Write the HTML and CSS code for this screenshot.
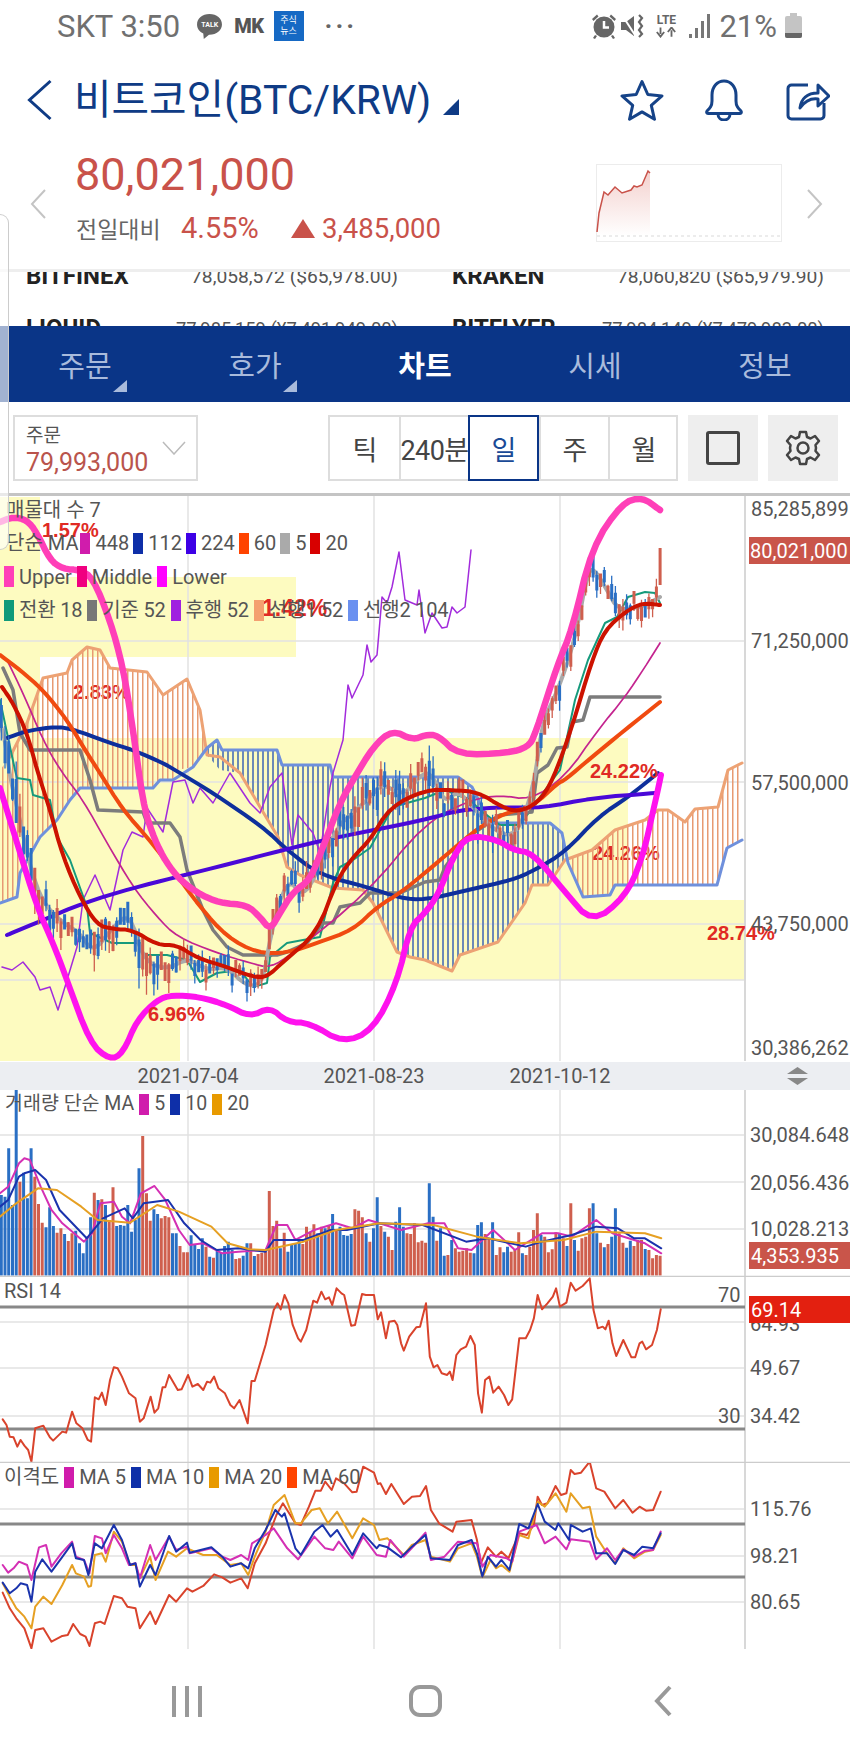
FILE: index.html
```html
<!DOCTYPE html>
<html lang="ko">
<head>
<meta charset="utf-8">
<title>비트코인(BTC/KRW)</title>
<link rel="stylesheet" href="styles.css">
</head>
<body>
<div class="app">
  <div class="side-tab"></div>

  <div class="status">
    <span class="st-text">SKT 3:50</span>
    <span class="talk"><svg class="talk-bubble" viewBox="0 0 26 26"><path d="M13 1C6 1 1 5.400 1 11c0 4 2.500 7 6 8.700L7.500 25l5-4.100c7 .2 12.500-4.300 12.500-9.900C25 5.400 20 1 13 1z"/></svg><b>TALK</b></span>
    <span class="mk">MK</span>
    <span class="news">주식<br>뉴스</span>
    <span class="dots">···</span>
    <span class="status-space"></span>
    <svg class="ic-alarm" viewBox="0 0 28 28"><circle cx="14" cy="15" r="10.500"/><path class="hand" d="M14 9v6.500h5"/><path d="M2 7l5-4.500 1.500 2-5 4.500zM26 7l-5-4.500-1.500 2 5 4.500zM5 23l-2 3 2 1 2-3zM23 23l2 3-2 1-2-3z"/></svg>
    <svg class="ic-mute" viewBox="0 0 24 26"><path d="M0 9h5l8-6v20l-8-6H0z"/><path class="cut" d="M1 2l13 20"/><path class="wave" d="M18 2l3 3-3 4 3 4-3 4 3 4-3 3"/></svg>
    <span class="lte"><b>LTE</b><svg viewBox="0 0 24 11"><path d="M6 0v7M2 5l4 5 4-5M18 10V3M14 5l4-5 4 5"/></svg></span>
    <span class="signal"><i class="s1"></i><i class="s2"></i><i class="s3"></i><i class="s4"></i></span>
    <span class="st-text st-pct">21%</span>
    <span class="battery"><i></i></span>
  </div>

  <div class="header">
    <svg class="ic-back" viewBox="0 0 26 42"><path d="M24 2L3 21l21 19"/></svg>
    <h1 class="title">비트코인(BTC/KRW)</h1>
    <span class="title-tri"></span>
    <span class="status-space"></span>
    <svg class="ic-head ic-star" viewBox="0 0 44 42"><path d="M22 2.500l5.800 13 14.200 1.400-10.700 9.400 3.200 14L22 32.900 9.500 40.300l3.200-14L2 16.900l14.200-1.400z"/></svg>
    <svg class="ic-head ic-bell" viewBox="0 0 40 42"><path d="M3 32c3-3 5-5 5-10v-6C8 8 13 2 20 2s12 6 12 14v6c0 5 2 7 5 10 1 1.500 0 2.500-1.500 2.500h-31C3 34.500 2 33.500 3 32z"/><path d="M14 35c0 3.500 2.500 6 6 6s6-2.500 6-6"/></svg>
    <svg class="ic-head ic-share" viewBox="0 0 44 42"><path d="M22 6H5.500A3.500 3.500 0 0 0 2 9.500v27A3.500 3.500 0 0 0 5.500 40h29a3.500 3.500 0 0 0 3.500-3.500V24"/><path d="M14 29c1-9 7-15 18-15V6l11 11-11 10v-7c-7-1-13 2-18 9z"/></svg>
  </div>

  <div class="quote">
    <svg class="ic-nav" viewBox="0 0 16 30"><path d="M15 1L2 15l13 14"/></svg>
    <div class="quote-main">
      <div class="price">80,021,000</div>
      <div class="change">
        <span class="change-label">전일대비</span>
        <span class="change-pct">4.55%</span>
        <span class="change-tri"></span>
        <span class="change-abs">3,485,000</span>
      </div>
    </div>
    <span class="status-space"></span>
    <svg class="mini" viewBox="596 164 186 78">
      <defs><linearGradient id="miniFill" x1="0" y1="0" x2="0" y2="1"><stop offset="0" stop-color="#d9655b" stop-opacity=".3"/><stop offset="1" stop-color="#d9655b" stop-opacity="0"/></linearGradient></defs>
      <rect class="mini-box" x="596.500" y="164.500" width="185" height="77"/>
      <line class="mini-dash" x1="597" y1="236" x2="781" y2="236"/>
      <path class="mini-fill" d="M597 232L599 213 604 192 608 195 615 187 622 193 631 190 634 186 637 187 642 185 648 171 650 173V236H597z"/>
      <path class="mini-line" d="M597 232L599 213 604 192 608 195 615 187 622 193 631 190 634 186 637 187 642 185 648 171 650 173"/>
    </svg>
    <svg class="ic-nav ic-nav-r" viewBox="0 0 16 30"><path d="M1 1l13 14L1 29"/></svg>
  </div>

  <div class="ticker">
    <div class="ticker-list">
      <div class="t-row">
        <div class="t-cell"><b>BITFINEX</b><span>78,058,572 ($65,978.00)</span></div>
        <div class="t-cell"><b>KRAKEN</b><span>78,060,820 ($65,979.90)</span></div>
      </div>
      <div class="t-row">
        <div class="t-cell"><b>LIQUID</b><span>77,985,159 (¥7,491,949.00)</span></div>
        <div class="t-cell"><b>BITFLYER</b><span>77,984,149 (¥7,479,983.00)</span></div>
      </div>
    </div>
  </div>

  <nav class="tabs">
    <div class="tab tab-more">주문</div>
    <div class="tab tab-more">호가</div>
    <div class="tab tab-on">차트</div>
    <div class="tab">시세</div>
    <div class="tab">정보</div>
  </nav>

  <div class="controls">
    <div class="order">
      <div class="order-text"><div class="order-label">주문</div><div class="order-value">79,993,000</div></div>
      <svg class="order-chev" viewBox="0 0 24 14"><path d="M1 1l11 12L23 1"/></svg>
    </div>
    <div class="seg">
      <div class="seg-cell">틱</div>
      <div class="seg-cell">240분</div>
      <div class="seg-cell seg-on">일</div>
      <div class="seg-cell">주</div>
      <div class="seg-cell">월</div>
    </div>
    <div class="tool"><span class="tool-square"></span></div>
    <div class="tool">
      <svg class="ic-gear" viewBox="0 0 36 36"><path d="M15 2h6l1 5 3.500 1.500L30 6l4 5-3.500 4 .5 3-.5 3 3.500 4-4 5-4.500-2.500L22 29l-1 5h-6l-1-5-3.500-1.500L6 30l-4-5 3.500-4-.5-3 .5-3L2 11l4-5 4.500 2.500L14 7z"/><circle cx="18" cy="18" r="5.500"/></svg>
    </div>
  </div>

  <div class="panel">
    <svg class="plot plot-main" viewBox="0 496 850 594">
      <defs>
        <pattern id="hatchOrange" width="5" height="10" patternUnits="userSpaceOnUse"><rect x="2" width="1.500" height="10" fill="#e79a72"/></pattern>
        <pattern id="hatchBlue" width="5" height="10" patternUnits="userSpaceOnUse"><rect x="2" width="2" height="10" fill="#6d8ab6"/></pattern>
      </defs>
      <rect class="yellow" x="0" y="497" width="40" height="80"/>
      <rect class="yellow" x="0" y="577" width="296" height="80"/>
      <rect class="yellow" x="0" y="657" width="40" height="81"/>
      <rect class="yellow" x="0" y="738" width="628" height="242"/>
      <rect class="yellow" x="628" y="900" width="117" height="80"/>
      <rect class="yellow" x="0" y="980" width="180" height="81"/>
      <path class="grid" d="M0 641H745M0 782H745M0 924H745M0 980H745M188 496V1061M374 496V1061M560 496V1061"/>
      <path class="axis" d="M745 496V1061"/>
      <text class="pct" x="73" y="699">2.83%</text>
      <text class="pct" x="592" y="860">24.26%</text>
      <polygon class="hatch-o" points="0,770 10,757 27,723 43,678 67,673 72,660 87,647 100,650 110,668 147,672 163,695 187,679 200,710 207,755 207,748 193,767 177,770 173,780 160,780 153,788 80,788 70,800 57,820 40,837 20,873 17,897 0,903"/>
      <polygon class="hatch-b" points="207,748 217,740 222,750 277,750 282,765 330,765 333,777 458,777 472,787 490,823 550,823 562,833 568,863 565,860 548,885 532,885 525,903 498,942 460,955 452,971 425,960 410,957 397,952 373,903 363,890 333,888 300,875 287,867 278,837 263,812 240,773 220,770 207,755"/>
      <polygon class="hatch-o" points="565,860 592,850 615,830 645,820 658,810 668,810 685,822 695,809 718,807 728,770 742,763 742,840 727,848 717,885 615,885 610,895 583,897 568,863"/>
      <polyline class="l-senkou1" points="10,757 27,723 43,678 67,673 72,660 87,647 100,650 110,668 147,672 163,695 187,679 200,710 207,755 220,757 240,773 263,812 278,837 287,867 300,875 333,888 363,890 373,903 397,952 410,957 425,960 452,971 460,955 498,942 525,903 532,885 548,885 565,860 592,850 615,830 645,820 658,810 668,810 685,822 695,809 718,807 728,770 742,763"/>
      <polyline class="l-senkou2" points="0,903 17,897 20,873 40,837 57,820 70,800 80,788 153,788 160,780 173,780 193,767 207,748 217,740 222,750 277,750 282,765 330,765 333,777 458,777 472,787 490,823 550,823 562,833 568,863 583,897 610,895 615,885 717,885 727,848 742,840"/>
      <polyline class="l-chikou" points="2,967 12,970 23,962 35,977 40,990 50,987 58,1010 77,947 83,900 95,875 110,910 123,850 132,832 143,837 147,808 163,832 173,782 185,780 193,803 200,788 213,803 230,773 250,803 260,813 270,787 282,773 292,845 298,815 313,833 320,853 330,787 333,773 343,740 348,685 352,698 363,675 367,645 371,662 377,655 382,597 387,603 392,587 399,552 405,600 417,605 419,590 425,633 432,613 442,628 447,627 452,607 457,613 465,607 471,550"/>
      <polyline class="l-tenkan" points="0,700 7,733 15,770 17,778 30,780 33,795 50,800 57,837 70,860 87,907 90,933 112,943 140,943 143,955 167,955 187,960 200,982 217,973 240,970 253,987 267,983 270,957 287,943 303,940 320,937 333,883 340,867 353,860 370,848 393,807 407,803 425,798 445,790 470,800 480,810 500,825 520,825 545,790 560,770 575,700 588,660 605,623 617,617 628,597 645,592 655,593 660,603"/>
      <polyline class="l-kijun" points="3,668 13,690 20,733 30,750 80,750 90,780 98,810 143,812 147,823 170,823 180,837 187,870 203,910 213,930 227,947 243,955 277,955 287,952 307,943 323,923 333,923 340,907 360,903 370,893 400,893 425,882 440,880 445,867 468,837 500,815 532,812 537,773 548,765 557,748 567,747 572,722 583,720 590,697 660,697"/>
      <polyline class="smooth l-ma448" points="7,660 23,693 43,740 60,770 83,800 107,843 133,887 157,917 177,937 217,953 250,963 270,968 293,953 367,893 425,823 470,800 500,795 530,800 565,777 598,730 625,697 645,667 660,643"/>
      <polyline class="smooth l-ma112" points="7,738 23,732 50,727 70,728 110,743 133,750 163,763 175,770 213,793 263,827 287,850 320,875 367,887 400,898 425,900 468,890 512,880 535,870 565,852 598,817 628,797 658,773"/>
      <polyline class="smooth l-ma224" points="7,935 43,920 83,903 133,888 173,878 233,863 283,850 333,838 425,820 458,810 508,807 542,808 592,798 655,793"/>
      <polyline class="smooth l-ma60" points="0,655 20,670 43,690 67,720 87,753 98,770 123,810 147,837 173,870 200,907 227,937 257,953 287,953 317,943 353,930 377,907 400,893 425,873 452,850 478,828 505,813 532,807 558,783 565,780 592,757 625,730 660,702"/>
      <polyline class="smooth l-ma5" points="0,723 5,740 10,777 17,807 30,867 43,903 63,923 80,933 93,953 113,927 130,913 143,960 167,970 187,958 207,970 227,967 247,987 263,983 270,937 287,877 303,897 317,873 337,827 353,813 370,797 383,783 403,797 425,770 435,780 445,803 458,790 475,810 502,837 520,830 535,780 542,723 558,690 575,640 588,570 595,570 607,590 618,610 642,607 660,597"/>
      <g id="candles"></g>
      <polyline class="smooth l-ma20" points="2,687 13,703 27,733 37,770 50,810 63,857 80,897 97,925 113,929 133,930 157,945 177,945 197,958 227,967 253,977 267,977 283,962 317,933 337,880 353,857 370,840 390,807 425,790 452,790 478,792 502,807 518,812 538,803 553,780 572,727 592,660 605,630 625,612 642,603 660,605"/>
      <polyline class="smooth l-upper" points="0,522 13,517 27,520 37,533 50,560 63,569 80,570 93,578 110,620 123,667 133,730 143,803 152,833 163,857 177,877 197,893 220,903 247,905 260,917 270,930 280,913 293,892 310,880 323,847 340,803 353,780 373,747 392,730 413,740 425,735 438,735 458,755 508,753 528,747 535,735 558,663 572,630 592,547 622,503 642,497 660,510"/>
      <polyline class="smooth l-lower" points="0,788 17,843 37,907 53,943 67,980 90,1043 110,1060 123,1053 137,1020 157,1000 172,995 200,997 227,1005 250,1017 270,1007 287,1022 310,1023 343,1043 373,1030 397,983 410,927 425,913 438,895 453,857 468,835 498,840 513,850 533,853 565,892 592,923 625,897 642,860 655,803 661,775"/>
      <text class="pct" x="42" y="537">1.57%</text>
      <text class="pct pct-wide" x="262" y="616">1.42%</text>
      <text class="pct" x="590" y="778">24.22%</text>
      <text class="pct" x="707" y="940">28.74%</text>
      <text class="pct" x="148" y="1021">6.96%</text>
      <rect class="datebar" x="0" y="1062" width="850" height="28"/>
      <polygon class="sort" points="797.500,1067 808,1074 787,1074"/>
      <polygon class="sort" points="787,1078 808,1078 797.500,1085"/>
      <text class="ax" x="751" y="509">85,285,899</text>
      <rect class="tag" x="749" y="537" width="101" height="27"/>
      <text class="ax ax-w" x="750" y="551">80,021,000</text>
      <text class="ax" x="751" y="641">71,250,000</text>
      <text class="ax" x="751" y="783">57,500,000</text>
      <text class="ax" x="751" y="924">43,750,000</text>
      <text class="ax" x="751" y="1048">30,386,262</text>
      <text class="ax ax-date" x="188" y="1076">2021-07-04</text>
      <text class="ax ax-date" x="374" y="1076">2021-08-23</text>
      <text class="ax ax-date" x="560" y="1076">2021-10-12</text>
    </svg>
    <div class="legend legend-main">
      <div class="lg-row"><span>매물대 수 7</span></div>
      <div class="lg-row"><span>단순 MA</span><i class="sw c-448"></i><span>448</span><i class="sw c-112"></i><span>112</span><i class="sw c-224"></i><span>224</span><i class="sw c-60"></i><span>60</span><i class="sw c-5"></i><span>5</span><i class="sw c-20"></i><span>20</span></div>
      <div class="lg-row"><i class="sw c-upper"></i><span>Upper</span><i class="sw c-middle"></i><span>Middle</span><i class="sw c-lower"></i><span>Lower</span></div>
      <div class="lg-row"><i class="sw c-tenkan"></i><span>전환 18</span><i class="sw c-kijun"></i><span>기준 52</span><i class="sw c-chikou"></i><span>후행 52</span><i class="sw c-s1"></i><span>선행1 52</span><i class="sw c-s2"></i><span>선행2 104</span></div>
    </div>
  </div>

  <div class="panel">
    <svg class="plot plot-vol" viewBox="0 1090 850 187">
      <path class="grid" d="M0 1135H745M0 1182H745M0 1229H745M188 1090V1276M374 1090V1276M560 1090V1276"/>
      <path class="axis" d="M745 1090V1276"/>
      <g id="volumes"></g>
      <g transform="translate(0 1060) scale(.542 .3333)">
        <polyline class="sub l-v5" points="0,400 15,380 35,310 45,295 55,300 75,380 95,450 115,490 155,545 170,520 185,430 210,425 225,470 240,490 260,400 285,378 305,420 330,510 350,555 375,550 410,580 440,575 490,570 510,495 530,495 545,540 580,510 620,490 650,505 680,480 700,490 740,510 790,490 820,490 845,565 870,570 910,510 950,570 1000,520 1030,520 1055,530 1100,480 1130,520 1170,540 1190,550 1220,580"/>
        <polyline class="sub l-v10" points="0,440 15,420 35,350 45,340 65,330 85,360 110,450 160,535 190,475 230,445 245,475 265,430 310,420 340,490 370,540 400,570 440,565 490,575 505,540 560,540 610,510 640,510 700,490 780,495 860,545 900,535 970,560 1000,545 1055,525 1100,500 1140,505 1170,535 1190,535 1220,565"/>
        <polyline class="sub l-v20" points="0,470 30,430 70,385 105,390 150,440 180,480 240,488 290,435 330,455 390,500 420,550 460,568 490,570 560,545 620,510 700,490 800,495 880,530 960,550 1040,540 1100,515 1190,520 1220,535"/>
      </g>
      <path class="divider" d="M0 1276.500H850"/>
      <text class="ax" x="750" y="1135">30,084.648</text>
      <text class="ax" x="750" y="1183">20,056.436</text>
      <text class="ax" x="750" y="1229">10,028.213</text>
      <rect class="tag" x="749" y="1242" width="101" height="27"/>
      <text class="ax ax-w" x="751" y="1256">4,353.935</text>
    </svg>
    <div class="legend legend-vol">
      <div class="lg-row"><span>거래량 단순 MA</span><i class="sw c-448"></i><span>5</span><i class="sw c-112"></i><span>10</span><i class="sw c-v20"></i><span>20</span></div>
    </div>
  </div>

  <div class="panel">
    <svg class="plot plot-rsi" viewBox="0 1277 850 186">
      <path class="grid" d="M0 1322H745M0 1368H745M0 1416H745M188 1277V1462M374 1277V1462M560 1277V1462"/>
      <path class="axis" d="M745 1277V1462"/>
      <path class="thick" d="M0 1307H745M0 1429H745"/>
      <g transform="translate(0 1280) scale(.542 .3333)">
        <polyline class="sub l-rsi" points="5,418 12,435 18,470 25,472 32,500 38,480 45,497 52,510 58,545 65,445 80,437 92,472 98,482 115,455 122,458 133,395 141,430 152,445 162,480 168,485 175,352 182,358 188,338 195,375 203,300 210,262 217,265 225,290 238,340 250,355 258,425 265,415 278,350 285,398 292,385 300,322 305,322 312,285 328,330 335,328 347,285 355,320 365,312 375,330 382,305 388,308 395,290 403,325 415,340 425,375 432,385 442,360 457,430 464,303 470,303 490,195 505,90 512,70 518,88 525,45 532,70 540,135 550,175 555,185 565,150 578,62 585,68 593,35 600,58 607,52 613,75 621,25 630,40 635,45 648,137 655,135 668,42 675,45 690,45 697,118 703,97 712,175 718,125 728,122 733,135 740,190 745,212 755,170 768,142 775,140 786,70 793,230 800,262 807,255 815,280 825,285 830,275 835,300 842,225 850,208 860,200 868,168 876,195 882,340 889,398 895,300 903,290 910,338 920,320 930,345 938,375 945,358 958,175 970,175 978,150 985,115 992,45 1000,88 1010,70 1020,50 1026,25 1033,80 1045,68 1053,8 1062,32 1075,18 1088,-5 1095,90 1103,145 1112,140 1117,148 1123,122 1130,190 1137,228 1150,180 1165,232 1172,232 1180,190 1185,185 1192,208 1203,195 1212,150 1219,88"/>
      </g>
      <path class="divider" d="M0 1462.500H850"/>
      <text class="ax" x="718" y="1295">70</text>
      <text class="ax" x="750" y="1324">64.93</text>
      <rect class="tag tag-rsi" x="749" y="1296" width="101" height="27"/>
      <text class="ax ax-w" x="751" y="1310">69.14</text>
      <text class="ax" x="750" y="1368">49.67</text>
      <text class="ax" x="718" y="1416">30</text>
      <text class="ax" x="750" y="1416">34.42</text>
    </svg>
    <div class="legend legend-rsi"><div class="lg-row"><span>RSI 14</span></div></div>
  </div>

  <div class="panel">
    <svg class="plot plot-disp" viewBox="0 1463 850 186">
      <path class="grid" d="M0 1509H745M0 1556H745M0 1602H745M188 1463V1649M374 1463V1649M560 1463V1649"/>
      <path class="axis" d="M745 1463V1649"/>
      <path class="thick" d="M0 1524H745M0 1577H745"/>
      <g transform="translate(0 1460) scale(.542 .3333)">
        <polyline class="sub l-d60" points="5,398 18,445 30,475 45,505 58,565 65,510 80,505 95,545 115,528 125,525 135,492 148,522 158,530 165,558 175,490 185,485 193,492 210,408 225,415 235,440 250,445 258,505 277,455 287,492 312,405 325,425 345,385 355,395 375,378 395,343 410,352 425,368 445,355 457,385 470,310 490,250 510,165 522,130 545,190 555,195 570,140 582,92 592,92 600,65 612,90 620,55 635,70 650,97 658,95 670,20 690,38 697,72 702,70 712,102 722,72 745,132 760,110 775,108 786,78 795,150 810,190 835,215 842,185 870,180 880,240 887,310 900,262 915,290 925,275 938,295 958,220 972,225 985,195 992,110 1000,135 1010,130 1025,78 1035,105 1045,100 1053,30 1060,42 1072,38 1088,5 1100,85 1115,95 1135,145 1150,120 1167,158 1180,140 1192,152 1205,150 1219,95"/>
        <polyline class="sub l-d20" points="5,370 18,410 30,445 45,470 58,505 65,440 80,410 95,432 115,375 133,315 140,340 155,350 163,380 168,378 175,285 188,280 195,305 210,215 225,245 240,315 250,315 258,355 277,290 287,360 310,275 325,290 345,265 375,285 400,285 425,315 445,310 458,345 470,290 490,215 505,135 525,105 545,190 555,190 575,150 590,145 605,190 622,155 650,235 670,175 690,195 700,240 715,235 745,285 760,255 785,240 795,290 830,305 845,265 870,250 880,290 890,352 905,300 915,325 925,315 940,335 958,225 975,235 992,125 1005,140 1025,100 1045,155 1053,100 1075,145 1088,140 1100,230 1120,280 1135,310 1150,265 1170,295 1190,275 1205,270 1219,225"/>
        <polyline class="sub l-d5" points="5,315 15,338 25,325 35,305 50,315 58,360 72,262 85,255 95,320 113,280 133,245 140,290 155,300 165,340 175,228 188,235 195,280 210,225 225,265 238,315 250,310 258,355 277,255 287,300 312,230 325,270 345,260 350,280 390,265 410,290 425,300 445,285 458,300 465,250 490,225 505,205 530,265 550,298 580,230 600,265 615,270 625,245 650,295 670,230 695,285 712,290 720,240 745,290 765,255 785,218 795,300 820,290 845,245 880,250 890,320 905,285 935,295 945,305 958,215 990,195 1005,250 1025,230 1045,268 1053,238 1088,245 1100,298 1120,265 1135,300 1150,268 1170,290 1190,272 1205,270 1219,215"/>
        <polyline class="sub l-d10" points="5,368 18,400 30,385 38,370 50,375 58,425 65,335 78,298 95,335 113,295 133,250 140,295 155,300 163,345 175,250 188,265 210,195 225,240 240,315 250,310 258,380 277,315 287,345 312,228 325,275 345,248 350,278 390,262 410,290 425,320 445,310 458,325 470,265 490,210 508,150 520,170 525,160 545,265 555,285 580,215 595,195 610,230 622,210 650,285 670,220 695,265 700,255 715,262 740,292 760,260 785,225 795,295 830,300 845,255 870,240 880,280 890,350 900,290 915,320 925,300 940,330 958,192 975,205 992,132 1005,185 1025,210 1030,190 1050,240 1053,195 1075,215 1090,205 1100,280 1120,280 1135,312 1150,270 1170,285 1185,260 1205,265 1219,220"/>
      </g>
      <text class="ax" x="750" y="1509">115.76</text>
      <text class="ax" x="750" y="1556">98.21</text>
      <text class="ax" x="750" y="1602">80.65</text>
    </svg>
    <div class="legend legend-disp">
      <div class="lg-row"><span>이격도</span><i class="sw c-448"></i><span>MA 5</span><i class="sw c-112"></i><span>MA 10</span><i class="sw c-v20"></i><span>MA 20</span><i class="sw c-60"></i><span>MA 60</span></div>
    </div>
  </div>

  <div class="softkeys">
    <span class="key key-recent"><i></i><i></i><i></i></span>
    <span class="key"><span class="key-home"></span></span>
    <span class="key"><svg class="key-back" viewBox="0 0 18 32"><path d="M16 2L3 16l13 14"/></svg></span>
  </div>
</div>
<script src="chart.js"></script>
</body>
</html>
```

FILE: styles.css
```css
* { box-sizing: border-box; }
html, body { margin: 0; padding: 0; background: #fff; }
body { font-family: Roboto, "Noto Sans CJK KR", sans-serif; color: #555; }
.app { position: relative; width: 850px; height: 1748px; overflow: hidden; background: #fff; }
.status-space { flex: 1; }

.side-tab { position: absolute; left: 0; top: 214px; width: 9px; height: 336px; z-index: 5; background: rgba(255,255,255,.62); border: 1px solid #ccc; border-left: 0; border-radius: 0 10px 10px 0; }

/* status bar */
.status { height: 60px; display: flex; align-items: center; padding: 0 48px 8px 57px; color: #707070; }
.st-text { font-size: 31px; white-space: nowrap; }
.talk { position: relative; width: 27px; height: 27px; margin-left: 16px; }
.talk-bubble { width: 27px; height: 27px; display: block; fill: #666; }
.talk b { position: absolute; left: 0; right: 0; top: 7px; text-align: center; font-size: 7px; color: #fff; line-height: 10px; }
.mk { margin-left: 11px; font-size: 20px; font-weight: 900; color: #555; letter-spacing: -.5px; }
.news { margin-left: 10px; width: 30px; height: 30px; background: #1669c4; color: #fff; font-size: 9px; line-height: 11px; text-align: center; padding-top: 4px; }
.dots { margin-left: 21px; font-size: 26px; line-height: 20px; letter-spacing: 3px; color: #666; font-weight: 700; }
.ic-alarm { width: 28px; height: 28px; fill: #666; }
.ic-alarm .hand { fill: none; stroke: #fff; stroke-width: 2.5; }
.ic-mute { width: 24px; height: 26px; margin-left: 3px; fill: #666; }
.ic-mute .cut { stroke: #fff; stroke-width: 2; fill: none; }
.ic-mute .wave { fill: none; stroke: #666; stroke-width: 2.2; }
.lte { width: 26px; margin-left: 8px; display: flex; flex-direction: column; align-items: center; }
.lte b { font-size: 12px; line-height: 13px; color: #666; }
.lte svg { width: 22px; height: 11px; fill: none; stroke: #666; stroke-width: 2; }
.signal { display: flex; align-items: flex-end; gap: 3px; height: 24px; margin-left: 10px; }
.signal i { display: block; width: 3px; background: #777; }
.s1 { height: 4px; } .s2 { height: 10px; } .s3 { height: 17px; } .s4 { height: 24px; }
.st-pct { margin-left: 9px; }
.battery { position: relative; width: 17px; height: 22px; margin-left: 8px; margin-top: 2px; background: #c4c4c4; border-radius: 2px; }
.battery::before { content: ""; position: absolute; left: 5px; top: -3px; width: 7px; height: 3px; background: #c4c4c4; }
.battery i { position: absolute; left: 0; right: 0; bottom: 0; height: 5px; background: #666; border-radius: 0 0 2px 2px; }

/* header */
.header { height: 80px; display: flex; align-items: center; padding: 0 20px 0 26px; }
.ic-back { width: 27px; height: 42px; fill: none; stroke: #0f3b85; stroke-width: 3; }
.title { margin: 0 0 0 21px; font-size: 40.800px; font-weight: 400; color: #0f3b85; white-space: nowrap; line-height: 44px; }
.title-tri { width: 0; height: 0; margin: 14px 0 0 12px; border-left: 16px solid transparent; border-bottom: 16px solid #0f3b85; }
.ic-head { height: 42px; fill: none; stroke: #164388; stroke-width: 3; stroke-linejoin: round; }
.ic-star { width: 44px; }
.ic-bell { width: 40px; margin-left: 40px; }
.ic-share { width: 44px; margin-left: 42px; }

/* quote */
.quote { height: 129px; display: flex; padding: 0 27px 0 30px; }
.ic-nav { width: 16px; height: 30px; margin-top: 49px; fill: none; stroke: #c4c4c4; stroke-width: 2; }
.ic-nav-r { margin-left: 25px; }
.quote-main { margin-left: 30px; padding-top: 10px; }
.price { font-size: 45px; line-height: 50px; color: #c9524a; margin-left: -1px; }
.change { display: flex; align-items: center; height: 34px; margin-top: 11px; }
.change-label { font-size: 23px; color: #666; width: 105px; white-space: nowrap; }
.change-pct { font-size: 29px; color: #c9524a; width: 110px; }
.change-tri { width: 0; height: 0; border-left: 12px solid transparent; border-right: 12px solid transparent; border-bottom: 19px solid #c9524a; margin-right: 7px; }
.change-abs { font-size: 27.500px; color: #c9524a; }
.mini { width: 186px; height: 78px; margin-top: 24px; }
.mini-box { fill: #fff; stroke: #ececec; }
.mini-dash { stroke: #e6e6e6; stroke-width: 1.5; stroke-dasharray: 3 3; }
.mini-fill { fill: url(#miniFill); }
.mini-line { fill: none; stroke: #c9524a; stroke-width: 1.5; }

/* ticker */
.ticker { height: 57px; border-top: 3px solid #eee; overflow: hidden; }
.ticker-list { margin-top: -22px; padding: 0 26px; }
.t-row { display: flex; gap: 54px; height: 52px; align-items: center; }
.t-cell { width: 372px; display: flex; justify-content: space-between; align-items: center; font-size: 19.200px; color: #555; }
.t-row + .t-row .t-cell { font-size: 18.400px; }
.t-cell b { font-size: 24px; color: #222; }

/* tabs */
.tabs { height: 76px; background: #0a3587; display: flex; }
.tab { position: relative; flex: 1; display: flex; align-items: center; justify-content: center; font-size: 29px; color: #a9bbdc; }
.tab-on { color: #fff; font-weight: 700; }
.tab-more::after { content: ""; position: absolute; left: 113px; bottom: 10px; width: 0; height: 0; border-left: 14px solid transparent; border-bottom: 12px solid #a9bbdc; }

/* controls */
.controls { height: 94px; display: flex; padding: 13px 12px 0 13px; border-bottom: 3px solid #c4c4c4; }
.order { width: 185px; height: 66px; border: 2px solid #ddd; display: flex; align-items: center; padding-left: 11px; }
.order-text { padding-top: 3px; }
.order-label { font-size: 19px; line-height: 26px; color: #555; }
.order-value { font-size: 25px; line-height: 28px; color: #b9544c; }
.order-chev { width: 24px; height: 14px; margin-left: 14px; fill: none; stroke: #bbb; stroke-width: 1.5; }
.seg { width: 350px; height: 66px; margin-left: 130px; display: flex; border: 2px solid #ddd; }
.seg-cell { width: 69px; flex: none; display: flex; align-items: center; justify-content: center; font-size: 27px; color: #444; border-left: 2px solid #ddd; white-space: nowrap; letter-spacing: -.6px; }
.seg-cell:first-child { border-left: 0; }
.seg-on { margin: -2px 0; width: 71px; border: 2px solid #0a3587; color: #1a4a96; }
.tool { width: 70px; height: 66px; margin-left: 10px; background: #eee; display: flex; align-items: center; justify-content: center; }
.tool-square { width: 34px; height: 34px; border: 3px solid #444; border-radius: 3px; }
.ic-gear { width: 36px; height: 36px; fill: none; stroke: #444; stroke-width: 2.5; stroke-linejoin: round; }

/* charts */
.panel { position: relative; }
.plot { display: block; width: 850px; }
.plot-main { height: 594px; }
.plot-vol { height: 187px; }
.plot-rsi, .plot-disp { height: 186px; }
.plot polyline { fill: none; stroke-linejoin: round; stroke-linecap: round; }
.sub { vector-effect: non-scaling-stroke; stroke-width: 2; }
.yellow { fill: #fdfbc0; }
.grid { fill: none; stroke: #e2e2e2; stroke-width: 1.5; }
.axis { fill: none; stroke: #d8d8d8; stroke-width: 2; }
.thick { fill: none; stroke: #888; stroke-width: 3; }
.divider { fill: none; stroke: #ccc; stroke-width: 1.5; }
.datebar { fill: #eceef2; }
.sort { fill: #888; }
.hatch-o { fill: url(#hatchOrange); }
.hatch-b { fill: url(#hatchBlue); }
.pct { font-family: "Liberation Sans", sans-serif; font-weight: 700; font-size: 20px; fill: #e02a24; }
.pct-wide { font-size: 23px; }
.ax { font-size: 20px; fill: #555; dominant-baseline: central; }
.ax-w { fill: #fff; }
.ax-date { text-anchor: middle; }
.tag { fill: #c9554a; }
.tag-rsi { fill: #e32010; }

.l-senkou1 { stroke: #eda274; stroke-width: 3; }
.l-senkou2 { stroke: #6f90dc; stroke-width: 3; }
.l-chikou { stroke: #a22bdc; stroke-width: 1.5; }
.l-tenkan { stroke: #169a7c; stroke-width: 2; }
.l-kijun { stroke: #7c7c7c; stroke-width: 3.5; }
.l-ma448 { stroke: #c4248f; stroke-width: 1.7; }
.l-ma112 { stroke: #0e2f9c; stroke-width: 4; }
.l-ma224 { stroke: #4a08d8; stroke-width: 4; }
.l-ma60 { stroke: #f04a10; stroke-width: 4; }
.l-ma5 { stroke: #aaa; stroke-width: 4; }
.l-ma20 { stroke: #cc1200; stroke-width: 4; }
.l-upper { stroke: #ff3fb8; stroke-width: 6.500; }
.l-lower { stroke: #ff12ee; stroke-width: 6; }
.l-v5, .l-d5 { stroke: #d430b4; }
.l-v10, .l-d10 { stroke: #1a33ad; }
.l-v20, .l-d20 { stroke: #e6a023; }
.l-rsi, .l-d60 { stroke: #d9432c; }

.bar-up { stroke: #cf5f4e; fill: none; }
.bar-down { stroke: #2a6fc4; fill: none; }

/* legends */
.legend { position: absolute; left: 0; top: 0; font-size: 20px; line-height: 22px; color: #555; }
.legend-main { top: -3px; }
.legend-main .lg-row { height: 33.500px; padding-left: 4px; }
.legend-main .lg-row:nth-child(-n+2) { padding-left: 6px; }
.legend-main .lg-row:nth-child(2) .sw:nth-child(2) { margin-left: 2px; }
.legend-main .lg-row:nth-child(2) .sw:nth-child(n+4) { margin-left: 4px; }
.legend-main .lg-row:nth-child(4) span { letter-spacing: -.2px; }
.legend-vol { top: 3px; left: 5px; font-size: 19.500px; }
.legend-rsi { top: 3px; left: 4px; }
.legend-disp { top: 3px; left: 4px; }
.lg-row { display: flex; align-items: center; white-space: nowrap; height: 22px; }
.sw { display: block; width: 10px; height: 21px; margin: 0 5px 0 5px; }
.lg-row:nth-child(n+3) .sw:first-child { margin-left: 0; }
.c-448 { background: #d01cac; }
.c-112 { background: #0e2fa8; }
.c-224 { background: #3d00e6; }
.c-60 { background: #ff4400; }
.c-5 { background: #aaa; }
.c-20 { background: #d80000; }
.c-upper { background: #ff3fb8; }
.c-middle { background: #f00080; }
.c-lower { background: #ff00ff; }
.c-tenkan { background: #109a7a; }
.c-kijun { background: #777; }
.c-chikou { background: #a020e0; }
.c-s1 { background: #f4a070; }
.c-s2 { background: #6a90f0; }
.c-v20 { background: #e89a00; }

/* soft keys */
.softkeys { height: 99px; display: grid; grid-template-columns: repeat(3, 1fr); align-items: center; padding: 5px 68px 0; }
.key { display: flex; justify-content: center; }
.key-recent { gap: 9px; }
.key-recent i { display: block; width: 4px; height: 31px; background: #999; }
.key-home { width: 33px; height: 32px; border: 4px solid #999; border-radius: 11px; }
.key-back { width: 18px; height: 32px; fill: none; stroke: #999; stroke-width: 4; }
```

FILE: chart.js
```js
(function () {
  var NS = 'http://www.w3.org/2000/svg';

  // round off the moving-average curves (Chaikin corner cutting)
  document.querySelectorAll('polyline.smooth').forEach(function (line) {
    var pts = line.getAttribute('points').trim().split(/\s+/).map(function (p) { return p.split(',').map(Number); });
    for (var n = 0; n < 2; n++) {
      var out = [pts[0]];
      for (var k = 0; k < pts.length - 1; k++) {
        var a = pts[k], b = pts[k + 1];
        out.push([a[0] * .75 + b[0] * .25, a[1] * .75 + b[1] * .25]);
        out.push([a[0] * .25 + b[0] * .75, a[1] * .25 + b[1] * .75]);
      }
      out.push(pts[pts.length - 1]);
      pts = out;
    }
    line.setAttribute('points', pts.map(function (p) { return p[0].toFixed(1) + ',' + p[1].toFixed(1); }).join(' '));
  });

  // one token per trading day: r = up, b = down, then the bar's top in 1/3 px below y 1090
  var days = ('b315 b320 b175 b345 b0 r275 b248 b325 b175 r260 r342 r398 b412 b352 b408 r428 r415 b432 r453 r430 ' +
    'b422 b460 b490 b440 b382 r308 b330 r328 b345 r390 r292 b408 b405 b407 b345 b425 b390 b235 r138 r310 ' +
    'r392 b358 b372 r385 r378 r382 b430 b430 r468 r487 r487 b436 b465 b477 b445 r470 b500 r503 b482 b487 ' +
    'b468 b455 b480 r507 r505 b497 b460 r460 b498 r492 r488 r485 r303 r408 r392 b475 r428 b485 b462 b460 ' +
    'b453 r462 r410 r425 r403 b430 r410 b415 r405 b372 r420 b410 b435 b437 b432 r358 r362 r382 b430 r455 ' +
    'b415 b322 r408 b425 r440 r480 b395 b352 b410 r430 r432 r400 r457 r452 r458 b280 b380 r452 b415 b497 ' +
    'r495 b450 r475 r485 r482 r475 r488 b490 b405 b397 r432 r445 b397 r495 r472 b487 b470 r485 r478 r427 ' +
    'b490 r495 r470 r420 r370 b435 r440 r487 r478 r427 b432 r445 b468 r340 b450 r482 r445 r440 r355 b340 ' +
    'b430 r458 b472 r462 b440 b355 r430 r458 b473 b452 r468 r450 r450 b477 r480 r505 r495 r497').split(' ');
  var BASE = 1275.5;

  function dayX(i) { return 1.3 + i * 3.722; }
  function noise(i) { var v = Math.sin(i * 12.9898) * 43758.5453; return v - Math.floor(v) - 0.5; }

  // candles follow the 5-day average of the price
  var avg = document.querySelector('.l-ma5').points;
  function avgAt(x) {
    for (var k = 1; k < avg.numberOfItems; k++) {
      var a = avg.getItem(k - 1), b = avg.getItem(k);
      if (x <= b.x) return a.y + (b.y - a.y) * (x - a.x) / (b.x - a.x || 1);
    }
    return avg.getItem(avg.numberOfItems - 1).y;
  }

  function path(parent, cls, width, d) {
    var p = document.createElementNS(NS, 'path');
    p.setAttribute('class', cls);
    p.setAttribute('stroke-width', width);
    p.setAttribute('d', d);
    parent.appendChild(p);
  }

  var vol = { r: '', b: '' }, wick = { r: '', b: '' }, body = { r: '', b: '' };
  days.forEach(function (t, i) {
    var c = t.charAt(0), top = 1090 + parseInt(t.slice(1), 10) / 3, x = dayX(i).toFixed(1);
    vol[c] += 'M' + x + ' ' + BASE + 'V' + top.toFixed(1);
    var mid = avgAt(dayX(i)) + noise(i) * 22;
    var reach = 7 + (BASE - top) * 0.2;
    if (i === 177) { body[c] += 'M' + x + ' 548V585'; return; }
    var hi = mid - reach * (0.7 + noise(i + 40)), lo = mid + reach * (0.8 + noise(i + 80));
    wick[c] += 'M' + x + ' ' + hi.toFixed(1) + 'V' + lo.toFixed(1);
    body[c] += 'M' + x + ' ' + (mid - reach * 0.5).toFixed(1) + 'V' + (mid + reach * 0.5).toFixed(1);
  });

  var vg = document.getElementById('volumes');
  path(vg, 'bar-up', 3, vol.r);
  path(vg, 'bar-down', 3, vol.b);
  var cg = document.getElementById('candles');
  path(cg, 'bar-up', 1.3, wick.r);
  path(cg, 'bar-down', 1.3, wick.b);
  path(cg, 'bar-up', 3, body.r);
  path(cg, 'bar-down', 3, body.b);
})();
```
